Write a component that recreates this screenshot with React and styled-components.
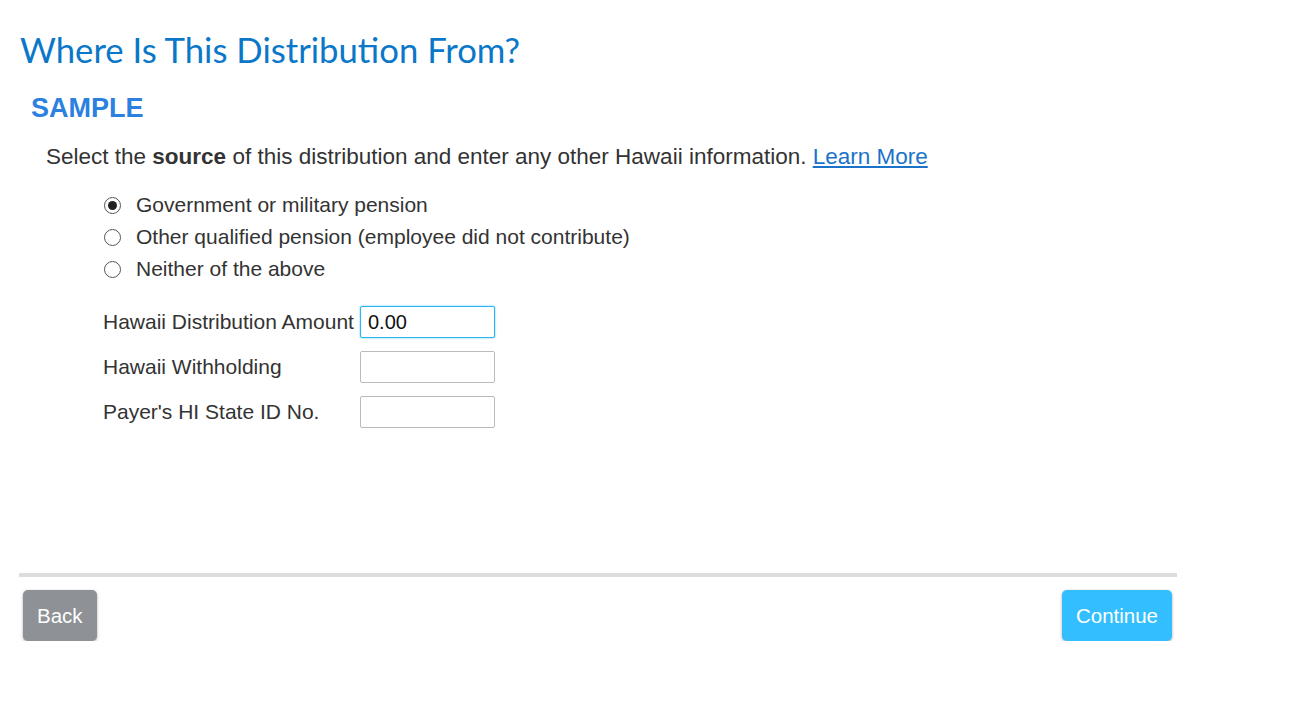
import React, { useState } from 'react';
import styled, { createGlobalStyle } from 'styled-components';

const GlobalStyle = createGlobalStyle`
  body {
    margin: 0;
    background: #fff;
    font-family: 'Liberation Sans', Arial, sans-serif;
    color: #333;
  }
`;

const Page = styled.div`
  width: 1158px;
  padding: 28px 0 0 19px;
`;

const Title = styled.h1`
  margin: 0 0 0 1px;
  font-family: Lato, 'Noto Sans', sans-serif;
  font-weight: 400;
  font-size: 34.7px;
  line-height: 44px;
  color: #0a77c8;
`;

const Sample = styled.h2`
  margin: 21px 0 0 12px;
  font-size: 27px;
  font-weight: 700;
  line-height: 30px;
  color: #2b80e0;
`;

const Intro = styled.p`
  margin: 21px 0 0 27px;
  font-size: 22.5px;
  line-height: 26px;
  color: #333;

  a {
    color: #1a73c8;
    text-decoration: underline;
  }
`;

const RadioList = styled.div`
  display: flex;
  flex-direction: column;
  gap: 8px;
  margin: 23px 0 0 85px;
`;

const RadioRow = styled.label`
  display: flex;
  align-items: center;
  gap: 15px;
  font-size: 21px;
  line-height: 24px;
  cursor: pointer;
`;

const Circle = styled.span`
  width: 15px;
  height: 15px;
  border: 1px solid #555;
  border-radius: 50%;
  display: flex;
  align-items: center;
  justify-content: center;

  &::after {
    content: '';
    width: 9px;
    height: 9px;
    border-radius: 50%;
    background: ${({ checked }) => (checked ? '#222' : 'transparent')};
  }
`;

const Fields = styled.div`
  display: grid;
  grid-template-columns: 257px 135px;
  row-gap: 13px;
  align-items: center;
  margin: 25px 0 0 84px;
`;

const FieldLabel = styled.label`
  font-size: 21px;
  line-height: 24px;
  white-space: nowrap;
`;

const Input = styled.input`
  box-sizing: border-box;
  width: 135px;
  height: 32px;
  border: 1px solid ${({ focused }) => (focused ? '#2cb5f0' : '#bbb')};
  box-shadow: ${({ focused }) => (focused ? '0 0 2px #47c0f5' : 'none')};
  border-radius: 2px;
  padding: 0 7px;
  font-family: 'Liberation Sans', Arial, sans-serif;
  font-size: 20px;
  color: #111;
  outline: none;
`;

const Divider = styled.hr`
  margin: 145px 0 0 0;
  border: 0;
  height: 4px;
  background: #ddd;
`;

const Footer = styled.div`
  display: flex;
  justify-content: space-between;
  padding: 13px 5px 0 4px;
`;

const Button = styled.button`
  height: 51px;
  padding: 0 14px;
  border: 0;
  border-radius: 5px;
  font-family: 'Liberation Sans', Arial, sans-serif;
  font-size: 20.5px;
  color: #fff;
  background: ${({ primary }) => (primary ? '#33bfff' : '#8e9196')};
  box-shadow: 0 1px 3px rgba(0, 0, 0, 0.35);
  cursor: pointer;
`;

const options = [
  'Government or military pension',
  'Other qualified pension (employee did not contribute)',
  'Neither of the above',
];

export default function App() {
  const [source, setSource] = useState(0);

  return (
    <>
      <GlobalStyle />
      <Page>
        <Title>Where Is This Distribution From?</Title>
        <Sample>SAMPLE</Sample>
        <Intro>
          Select the <b>source</b> of this distribution and enter any other Hawaii information.{' '}
          <a href="#">Learn More</a>
        </Intro>
        <RadioList>
          {options.map((o, i) => (
            <RadioRow key={o} onClick={() => setSource(i)}>
              <Circle checked={source === i} />
              {o}
            </RadioRow>
          ))}
        </RadioList>
        <Fields>
          <FieldLabel>Hawaii Distribution Amount</FieldLabel>
          <Input focused defaultValue="0.00" />
          <FieldLabel>Hawaii Withholding</FieldLabel>
          <Input />
          <FieldLabel>Payer's HI State ID No.</FieldLabel>
          <Input />
        </Fields>
        <Divider />
        <Footer>
          <Button>Back</Button>
          <Button primary>Continue</Button>
        </Footer>
      </Page>
    </>
  );
}
